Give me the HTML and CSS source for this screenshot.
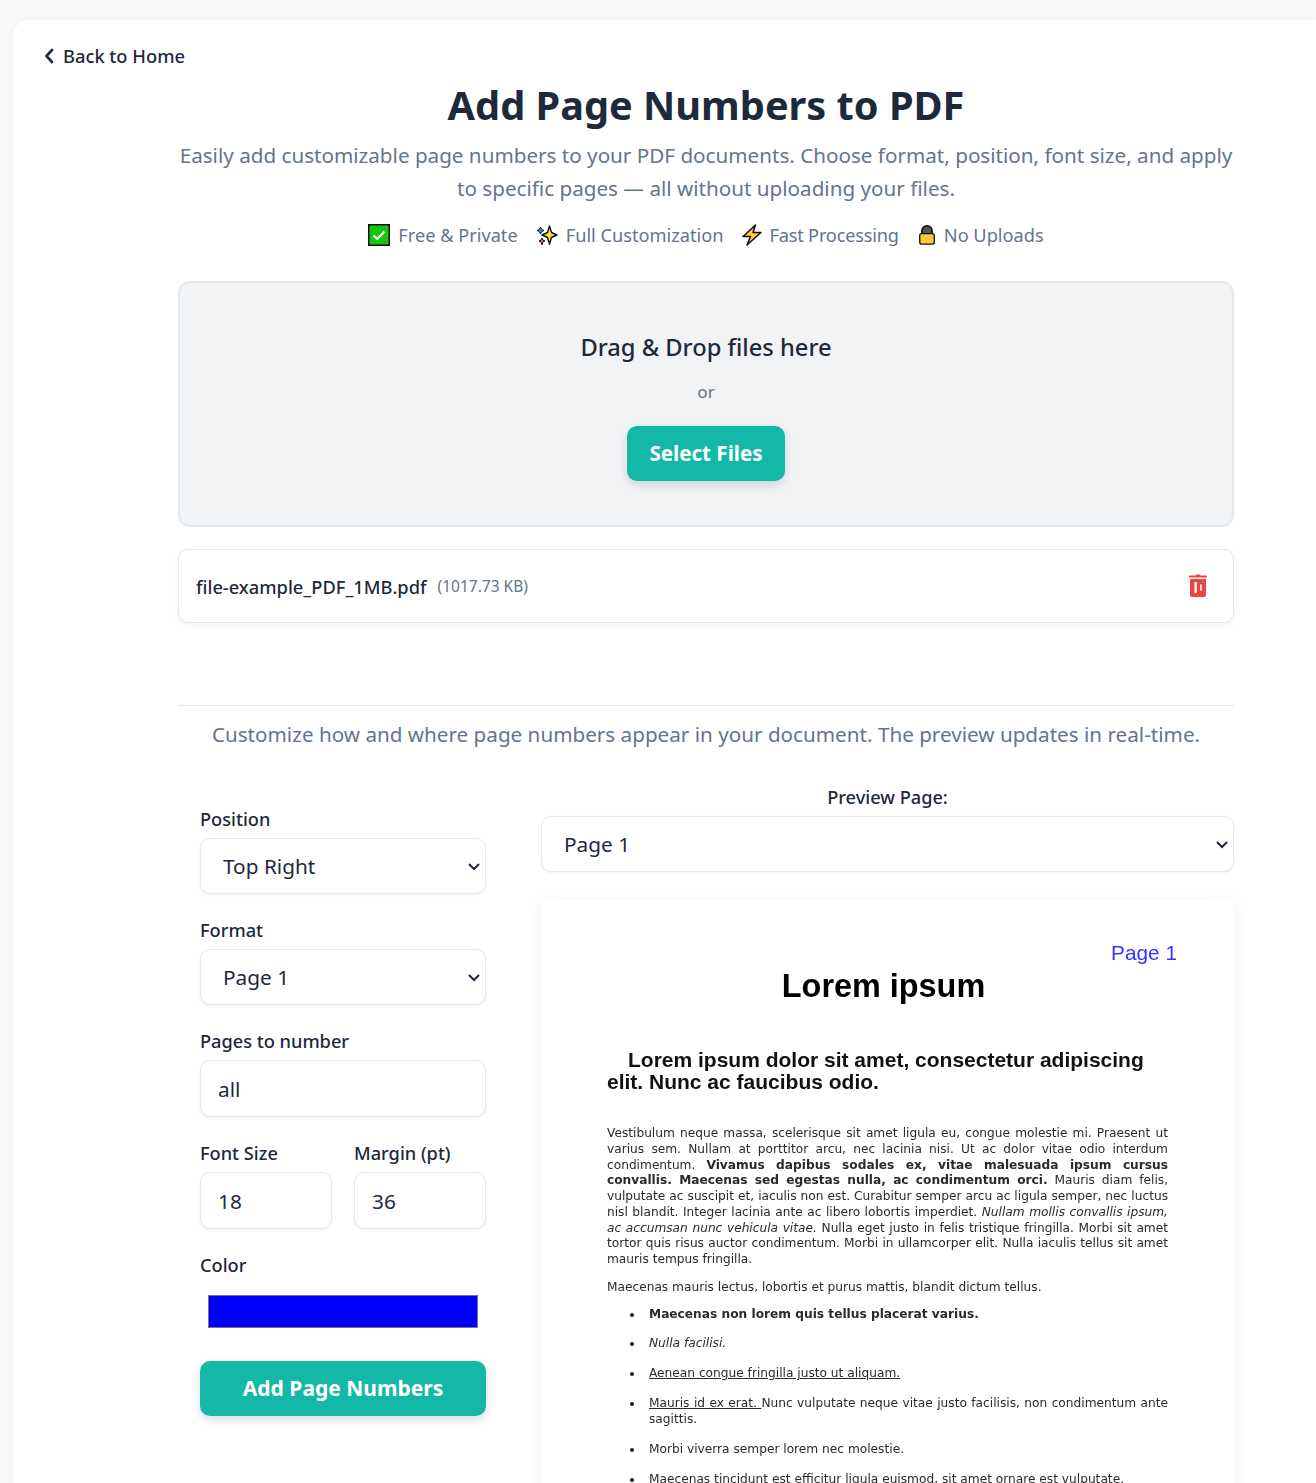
FILE: index.html
```html
<!DOCTYPE html>
<html lang="en">
<head>
<meta charset="utf-8">
<title>Add Page Numbers to PDF</title>
<link rel="stylesheet" href="styles.css">
</head>
<body>
<main class="shell">
  <a class="back" href="#"><svg class="back-icon" viewBox="0 0 10 16" aria-hidden="true"><path d="M8 2 2.500 8 8 14" fill="none" stroke="#1e293b" stroke-width="2.600" stroke-linecap="round" stroke-linejoin="round"/></svg>Back to Home</a>
  <div class="content">
    <h1>Add Page Numbers to PDF</h1>
    <p class="lead">Easily add customizable page numbers to your PDF documents. Choose format, position, font size, and apply to specific pages — all without uploading your files.</p>
    <ul class="badges">
      <li><svg class="emoji" viewBox="0 0 22 22"><rect x=".75" y=".75" width="20.5" height="20.5" fill="#16c60c" stroke="#111" stroke-width="1.5"/><path d="M5.500 11.500 9.300 15 16.500 7.500" fill="none" stroke="#fff" stroke-width="2.200"/></svg>Free &amp; Private</li>
      <li><svg class="emoji" viewBox="0 0 22 22"><path d="M13.500 2 15.500 8.500l5.500 2.500-5.500 2.500-2 6.500-2-6.500-5.500-2.500 5.500-2.500z" fill="#ffe03d" stroke="#111" stroke-width="1.400" stroke-linejoin="round"/><path d="M4.500 3 5.600 5.400 8 6.500 5.600 7.600 4.500 10 3.400 7.600 1 6.500 3.400 5.400z" fill="#19a6d8" stroke="#111" stroke-width="1"/><path d="M6 14l.9 2.100L9 17l-2.100.9L6 21l-.9-3.100L3 17l2.100-.9z" fill="#ec6fb0" stroke="#111" stroke-width="1"/></svg>Full Customization</li>
      <li class="badge-bolt"><svg class="emoji" viewBox="0 0 22 22"><path d="M14.500 1 2 12.500h7.500L6 21l14-12.500h-8z" fill="#ffc83d" stroke="#111" stroke-width="1.500" stroke-linejoin="round"/></svg>Fast Processing</li>
      <li class="badge-lock"><svg class="emoji" viewBox="0 0 22 22"><path d="M5.500 10V6.500a5.500 5.500 0 0 1 11 0V10z" fill="#555" stroke="#111" stroke-width="2"/><rect x="3" y="9.500" width="16" height="11.500" rx="2" fill="#ffc83d" stroke="#111" stroke-width="1.500"/></svg>No Uploads</li>
    </ul>

    <section class="drop">
      <h2>Drag &amp; Drop files here</h2>
      <p class="or">or</p>
      <button class="btn btn-select" type="button">Select Files</button>
    </section>

    <div class="file">
      <span class="file-name">file-example_PDF_1MB.pdf</span>
      <span class="file-size">(1017.73 KB)</span>
      <svg class="trash" viewBox="0 0 20 24" aria-label="Remove"><path fill="#ef4444" fill-rule="evenodd" d="M7.500 1.500Q7.800.500 9 .500h2q1.200 0 1.500 1H18q1 0 1 1v1H1v-1q0-1 1-1zM2 5h16v16q0 2-2 2H4q-2 0-2-2zm4.500 3v11h2.300V8zm5.500 2.500v6h1.800v-6z"/></svg>
    </div>

    <hr class="rule">
    <p class="intro">Customize how and where page numbers appear in your document. The preview updates in real-time.</p>

    <div class="tool">
      <form class="controls">
        <label class="field"><span class="label">Position</span>
          <select class="ctl"><option>Top Right</option></select></label>
        <label class="field"><span class="label">Format</span>
          <select class="ctl"><option>Page 1</option></select></label>
        <label class="field"><span class="label">Pages to number</span>
          <input class="ctl ctl-text" type="text" value="all"></label>
        <div class="pair">
          <label class="field"><span class="label">Font Size</span>
            <input class="ctl ctl-text" type="number" value="18"></label>
          <label class="field"><span class="label">Margin (pt)</span>
            <input class="ctl ctl-text" type="number" value="36"></label>
        </div>
        <label class="field"><span class="label">Color</span>
          <input class="color" type="color" value="#0000ff"></label>
        <button class="btn btn-add" type="button">Add Page Numbers</button>
      </form>

      <div class="preview">
        <label class="preview-label" for="pg">Preview Page:</label>
        <select id="pg" class="ctl"><option>Page 1</option></select>
        <article class="sheet">
          <span class="stamp">Page 1</span>
          <h3 class="doc-title">Lorem ipsum</h3>
          <p class="doc-sub">Lorem ipsum dolor sit amet, consectetur adipiscing elit. Nunc ac faucibus odio.</p>
          <p class="doc-p">Vestibulum neque massa, scelerisque sit amet ligula eu, congue molestie mi. Praesent ut varius sem. Nullam at porttitor arcu, nec lacinia nisi. Ut ac dolor vitae odio interdum condimentum. <b>Vivamus dapibus sodales ex, vitae malesuada ipsum cursus convallis. Maecenas sed egestas nulla, ac condimentum orci.</b> Mauris diam felis, vulputate ac suscipit et, iaculis non est. Curabitur semper arcu ac ligula semper, nec luctus nisl blandit. Integer lacinia ante ac libero lobortis imperdiet. <i>Nullam mollis convallis ipsum, ac accumsan nunc vehicula vitae.</i> Nulla eget justo in felis tristique fringilla. Morbi sit amet tortor quis risus auctor condimentum. Morbi in ullamcorper elit. Nulla iaculis tellus sit amet mauris tempus fringilla.</p>
          <p class="doc-p">Maecenas mauris lectus, lobortis et purus mattis, blandit dictum tellus.</p>
          <ul class="doc-list">
            <li><b>Maecenas non lorem quis tellus placerat varius.</b></li>
            <li><i>Nulla facilisi.</i></li>
            <li><u>Aenean congue fringilla justo ut aliquam. </u></li>
            <li><u>Mauris id ex erat. </u>Nunc vulputate neque vitae justo facilisis, non condimentum ante sagittis.</li>
            <li>Morbi viverra semper lorem nec molestie.</li>
            <li>Maecenas tincidunt est efficitur ligula euismod, sit amet ornare est vulputate.</li>
          </ul>
        </article>
      </div>
    </div>
  </div>
</main>
</body>
</html>
```
FILE: styles.css
```css
* { box-sizing: border-box; }
html, body { margin: 0; height: 1483px; overflow: hidden; }
body {
  background: #f8f9fb;
  font-family: "Noto Sans", "Open Sans", sans-serif;
  color: #1e293b;
}
.shell {
  width: 1303px;
  height: 1463px;
  margin: 20px 0 0 13px;
  padding: 22px 0 0 31px;
  overflow: hidden;
  background: #fff;
  border-radius: 16px 0 0 0;
  box-shadow: 0 0 10px rgba(15, 23, 42, .03);
}
.back {
  display: flex;
  align-items: center;
  gap: 9px;
  height: 26px;
  color: #1e293b;
  text-decoration: none;
  font-size: 18.3px;
  font-weight: 500;
}
.back-icon { width: 10px; height: 16px; margin-top: 2px; }
.content { width: 1056px; margin-left: 134px; }
h1 {
  margin: 8px 0 0;
  text-align: center;
  font-size: 39.7px;
  line-height: 58px;
  font-weight: 700;
}
.lead {
  margin: 5px 0 0;
  text-align: center;
  font-size: 20.65px;
  line-height: 33px;
  color: #64748b;
}
.badges {
  display: flex;
  justify-content: center;
  gap: 18px;
  margin: 17px 0 0;
  padding: 0;
  list-style: none;
  font-size: 18.2px;
  line-height: 26px;
  color: #64748b;
}
.badges li { display: flex; align-items: center; gap: 8px; }
.emoji { width: 22px; height: 22px; }
.badges .badge-bolt { gap: 6px; letter-spacing: -.2px; }
.badges .badge-lock { gap: 7px; }
.badge-lock .emoji { width: 20px; }
.drop {
  margin-top: 33px;
  height: 246px;
  padding-top: 46px;
  text-align: center;
  background: #f2f3f5;
  border: 2px solid #e2e8f0;
  border-radius: 12px;
}
.drop h2 { margin: 0; font-size: 23.7px; line-height: 36px; font-weight: 500; }
.or { margin: 14px 0 0; font-size: 17px; line-height: 26px; color: #64748b; }
.btn {
  border: 0;
  color: #fff;
  font: 700 20.6px/1 "Noto Sans", sans-serif;
  background: #14b8a6;
  border-radius: 10px;
  box-shadow: 0 4px 8px rgba(15, 23, 42, .14);
}
.btn-select { margin-top: 21px; width: 158px; height: 55px; }
.file {
  display: flex;
  align-items: center;
  height: 74px;
  margin-top: 22px;
  padding: 0 25px 0 17px;
  border: 1px solid #e2e8f0;
  border-radius: 10px;
  box-shadow: 0 2px 5px rgba(15, 23, 42, .05);
}
.file-name { font-size: 18.3px; font-weight: 500; }
.file-size { margin-left: 11px; font-size: 15.5px; color: #64748b; }
.trash { width: 20px; height: 24px; margin-left: auto; }
.rule { height: 1px; margin: 82px 0 0; border: 0; background: #e2e8f0; }
.intro {
  margin: 12px 0 0;
  text-align: center;
  font-size: 20.67px;
  line-height: 33px;
  color: #64748b;
}
.tool {
  display: grid;
  grid-template-columns: 286px 693px;
  column-gap: 55px;
  margin: 34px 0 0 22px;
  width: 1034px;
}
.controls { display: flex; flex-direction: column; gap: 25px; padding-top: 23px; }
.field { display: block; min-width: 0; }
.label { display: block; margin-bottom: 8px; font-size: 18.2px; line-height: 22px; font-weight: 500; }
.ctl {
  display: block;
  width: 100%;
  height: 56px;
  padding: 0 32px 0 22px;
  appearance: none;
  background: #fff url("data:image/svg+xml,%3Csvg xmlns='http://www.w3.org/2000/svg' viewBox='0 0 14 9'%3E%3Cpath d='M2 2l5 5 5-5' fill='none' stroke='%231e293b' stroke-width='2'/%3E%3C/svg%3E") no-repeat right 4px center / 14px 9px;
  color: #1e293b;
  font: 400 20.8px "Noto Sans", sans-serif;
  border: 1px solid #e2e8f0;
  border-radius: 10px;
  box-shadow: 0 1px 3px rgba(15, 23, 42, .06);
}
.ctl-text { height: 57px; padding: 0 17px; background-image: none; }
.pair { display: grid; grid-template-columns: 132px 132px; column-gap: 22px; }
.color { display: block; width: 100%; height: 55px; padding: 7px 6px; background: #fff; border: 0; }
.btn-add { width: 286px; height: 55px; margin-top: -3px; font-size: 21px; }
.preview-label { display: block; margin-bottom: 6px; text-align: center; font-size: 18.2px; line-height: 25px; font-weight: 500; }
.sheet {
  position: relative;
  height: 900px;
  margin-top: 28px;
  padding: 68px 66px 0;
  background: #fff;
  border-radius: 8px;
  box-shadow: 0 4px 18px rgba(15, 23, 42, .06);
  color: #2a2a2a;
  font-family: "DejaVu Sans", sans-serif;
}
.stamp {
  position: absolute;
  top: 41px;
  right: 57px;
  color: #3333ff;
  font: 400 20.8px "Liberation Sans", sans-serif;
  filter: blur(.4px);
}
.doc-title {
  margin: 0;
  text-align: center;
  padding-right: 8px;
  color: #000;
  font: 700 32.4px/36px "Liberation Sans", sans-serif;
  filter: blur(.4px);
}
.doc-sub {
  margin: 45px 0 0;
  text-indent: 21px;
  color: #111;
  font: 700 21px/22px "Liberation Sans", sans-serif;
  filter: blur(.4px);
}
.doc-p {
  margin: 33px 0 0;
  text-align: justify;
  font-size: 12.2px;
  line-height: 15.75px;
  filter: blur(.5px);
}
.doc-p + .doc-p { margin-top: 12px; }
.doc-list { margin: 11px 0 0; padding: 0 0 0 42px; list-style: none; font-size: 12.2px; line-height: 15.75px; filter: blur(.5px); }
.doc-list li { position: relative; margin-bottom: 14.2px; text-align: justify; }
.doc-list li::before {
  content: "";
  position: absolute;
  left: -19px;
  top: 6px;
  width: 4px;
  height: 4px;
  border-radius: 50%;
  background: #222;
}
```
